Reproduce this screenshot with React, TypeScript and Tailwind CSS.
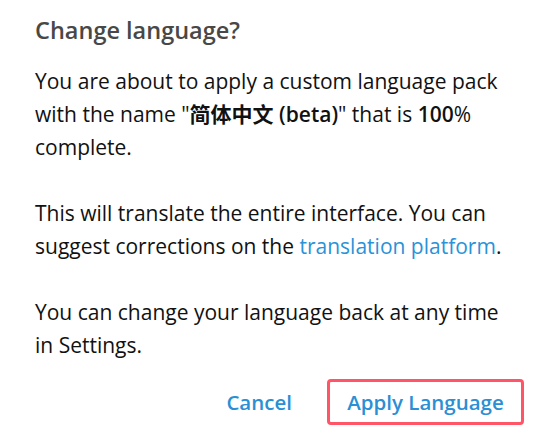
import React from 'react';

const App: React.FC = () => {
  return (
    <div className="w-[540px] h-[437px] bg-white overflow-hidden font-['Open_Sans','Noto_Sans_CJK_SC',sans-serif]">
      <div className="pl-[35px] pr-[30px] pt-[13px]">
        <h2 className="text-[23.5px] leading-[34px] font-semibold text-[#484848]">Change language?</h2>
        <div className="mt-[18px] text-[21px] leading-[33px] text-[#111]">
          <p>
            You are about to apply a custom language pack with the name "
            <span className="font-semibold">简体中文 (beta)</span>" that is{' '}
            <span className="font-semibold">100</span>% complete.
          </p>
          <p className="mt-[33px]">
            This will translate the entire interface. You can suggest corrections on the{' '}
            <a className="text-[#2a92d8]">translation platform</a>.
          </p>
          <p className="mt-[33px]">
            You can change your language back at any time in Settings.
          </p>
        </div>
        <div className="flex justify-end items-center gap-[35px] mt-[17px] -mr-[14px]">
          <button className="text-[20.5px] font-semibold text-[#2a8fd4]">Cancel</button>
          <button className="h-[46px] w-[197px] rounded-[4px] border-[3px] border-[#ff5566] text-[20.5px] font-semibold text-[#2a8fd4]">
            Apply Language
          </button>
        </div>
      </div>
    </div>
  );
};

export default App;
